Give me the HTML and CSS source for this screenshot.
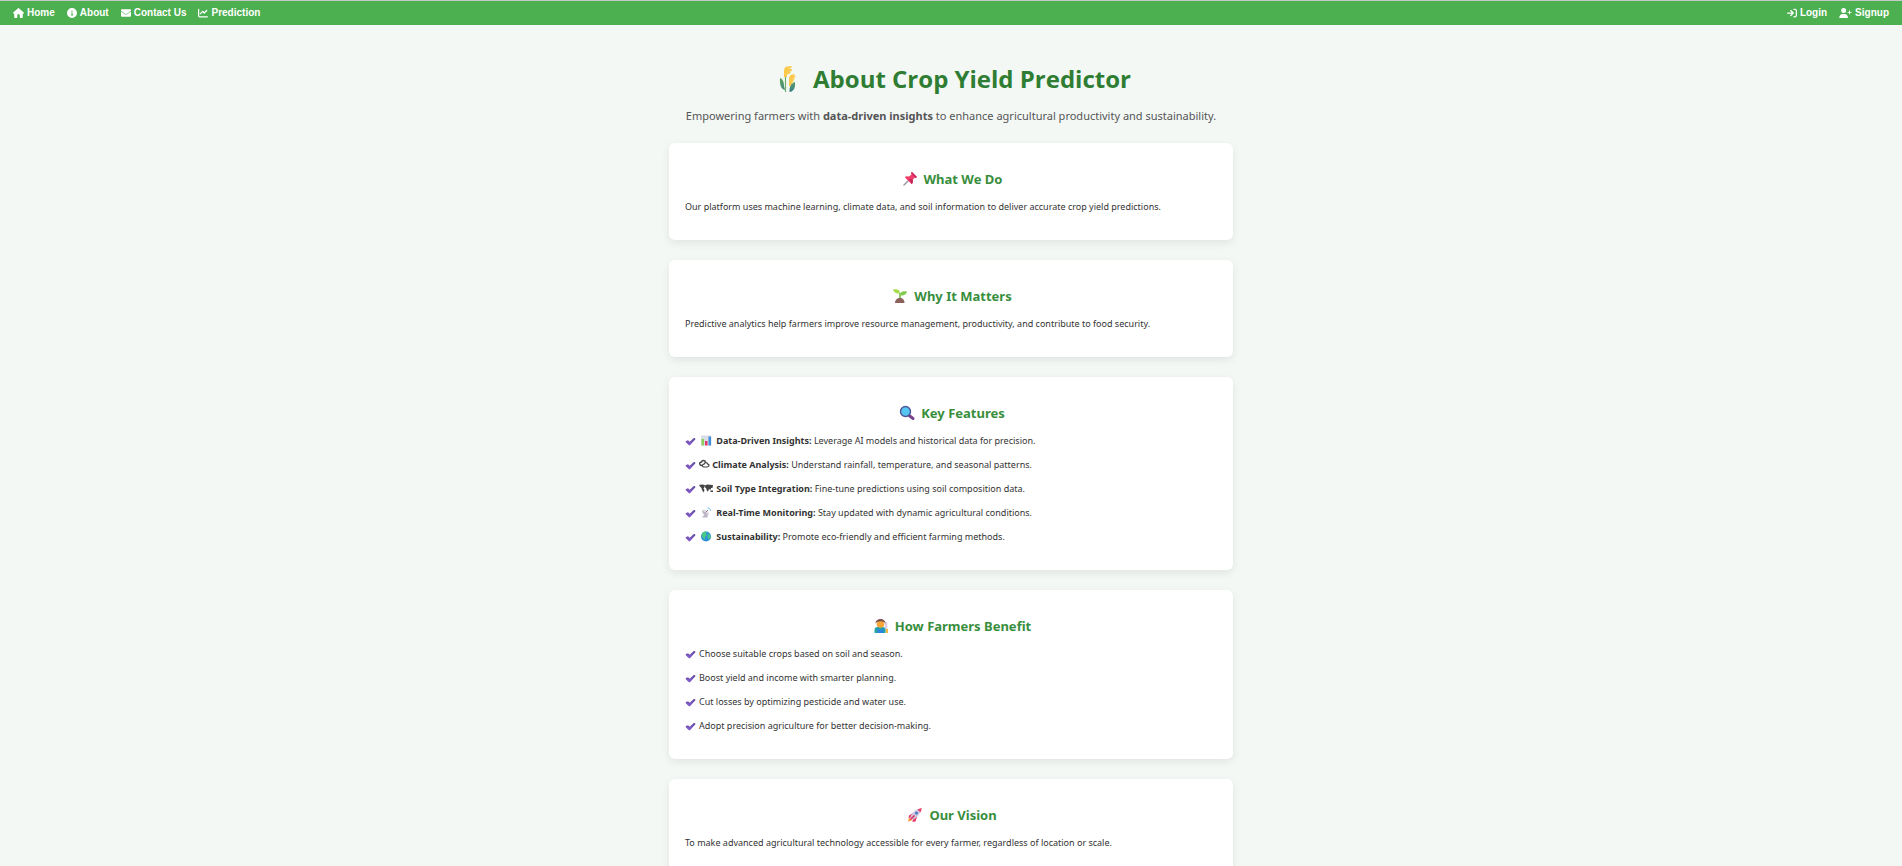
FILE: index.html
```html
<!DOCTYPE html>
<html lang="en">
<head>
<meta charset="utf-8">
<title>About Crop Yield Predictor</title>
<link rel="stylesheet" href="styles.css">
</head>
<body>
<svg class="defs" aria-hidden="true">
  <defs>
    <linearGradient id="violet" x1="0" y1="0" x2="0" y2="1"><stop offset="0" stop-color="#5f4b9c"/><stop offset="1" stop-color="#8a5fd6"/></linearGradient>
    <linearGradient id="leafdark" x1="0" y1="0" x2="0" y2="1"><stop offset="0" stop-color="#5fa557"/><stop offset="1" stop-color="#3f7f8c"/></linearGradient>
    <symbol id="check" viewBox="0 0 20 20"><path d="M2 9 L5.500 7.500 L8.500 10.500 L16 3.500 Q19 3 19 6 L9.500 16.500 Q8 18 6.500 16.500 L1.500 11.500 Q.5 10 2 9Z" fill="url(#violet)"/></symbol>
  </defs>
</svg>
<nav class="navbar">
  <div class="nav-group">
    <a class="nav-link" href="#"><svg class="nav-icon wide" viewBox="0 0 576 512"><path d="M575.800 255.500c0 18-15 32.100-32 32.100h-32l.7 160.200c0 2.700-.2 5.400-.5 8.100V472c0 22.100-17.900 40-40 40H392c-22.100 0-40-17.900-40-40V352c0-17.700-14.300-32-32-32h-64c-17.700 0-32 14.300-32 32v120c0 22.100-17.900 40-40 40h-80c-22.100 0-40-17.900-40-40V287.600H32c-18 0-32-14-32-32.100 0-9 3-17 10-24L266.400 8c7-7 15-8 22-8s15 2 21 7l255.400 224.500c8 7 12 15 11 24z"/></svg>Home</a>
    <a class="nav-link" href="#"><svg class="nav-icon" viewBox="0 0 512 512"><path fill-rule="evenodd" d="M256 512a256 256 0 1 0 0-512 256 256 0 1 0 0 512zM216 336h24v-64h-24c-13 0-24-11-24-24s11-24 24-24h48c13 0 24 11 24 24v88h8c13 0 24 11 24 24s-11 24-24 24h-80c-13 0-24-11-24-24s11-24 24-24zm40-208a32 32 0 1 1 0 64 32 32 0 1 1 0-64z"/></svg>About</a>
    <a class="nav-link" href="#"><svg class="nav-icon" viewBox="0 0 512 512"><path d="M48 64C21.500 64 0 85.500 0 112c0 15 7 29 19 38l218 164c11 8 27 8 38 0l218-164c12-9 19-23 19-38 0-26.500-21.500-48-48-48H48zM0 176v208c0 35 29 64 64 64h384c35 0 64-29 64-64V176L294 339c-23 17-53 17-76 0L0 176z"/></svg>Contact Us</a>
    <a class="nav-link" href="#"><svg class="nav-icon" viewBox="0 0 512 512"><path d="M64 64c0-18-14-32-32-32S0 46 0 64v336c0 44 36 80 80 80h400c18 0 32-14 32-32s-14-32-32-32H80c-9 0-16-7-16-16V64zm407 87c12-13 12-33 0-46s-33-12-46 0L320 211l-57-58c-13-12-33-12-46 0L105 265c-12 13-12 33 0 46s33 12 46 0l89-90 57 58c13 12 33 12 46 0l128-128z"/></svg>Prediction</a>
  </div>
  <div class="nav-group">
    <a class="nav-link" href="#"><svg class="nav-icon" viewBox="0 0 512 512"><path d="M352 96h64c18 0 32 14 32 32v256c0 18-14 32-32 32h-64c-18 0-32 14-32 32s14 32 32 32h64c53 0 96-43 96-96V128c0-53-43-96-96-96h-64c-18 0-32 14-32 32s14 32 32 32zm-9 183c13-13 13-33 0-46L215 105c-13-12-33-12-46 0s-12 33 0 46l73 73H32c-18 0-32 14-32 32s14 32 32 32h210l-73 73c-12 13-12 33 0 46s33 12 46 0l128-128z"/></svg>Login</a>
    <a class="nav-link" href="#"><svg class="nav-icon wider" viewBox="0 0 640 512"><path d="M96 128a128 128 0 1 1 256 0 128 128 0 1 1-256 0zM0 482c0-98 80-178 178-178h92c98 0 178 80 178 178 0 17-13 30-30 30H30c-17 0-30-13-30-30zm504-170v-64h-64c-13 0-24-11-24-24s11-24 24-24h64v-64c0-13 11-24 24-24s24 11 24 24v64h64c13 0 24 11 24 24s-11 24-24 24h-64v64c0 13-11 24-24 24s-24-11-24-24z"/></svg>Signup</a>
  </div>
</nav>

<main class="page">
  <h1 class="title"><svg class="title-icon" viewBox="0 0 34 28"><path d="M14.500 27V8M20 27V17" stroke="#6fae68" stroke-width="1.200"/><path d="M9 13c3 1 4 4 4 8l1 4c-4-1-5.500-5-5-12zM24 17c-3 1-6 4-5.500 10 4-1 6-3 5.500-10z" fill="url(#leafdark)"/><path d="M13 12V6q0-4 3-4.500L21 1l-1 2-3 1h4.500L20 6.500l-3 .5h3l-2 2-2 .5V12zM18 21v-7q0-4 3-4.500l3-.5-1 2h2l-2 2-2 .500h3L22 16l-1 .5h2l-2 2-1 .5v2z" fill="#fcc94a"/></svg>About Crop Yield Predictor</h1>
  <p class="subtitle">Empowering farmers with <strong>data-driven insights</strong> to enhance agricultural productivity and sustainability.</p>

  <section class="card">
    <h2 class="card-title"><svg class="card-icon" viewBox="0 0 20 16"><path d="M3.500 14.500L9 9" stroke="#998da5" stroke-width="1.300"/><path d="M12 1l5 5-1.500 1-1-.3-2 2.300.2 3-1.200 1L5 6.500l1-1.200 3 .2L11.500 3.500 11 2z" fill="#f03c66"/><path d="M12 1l5 5-1.500 1L11 2zM9 8l4 .500-.3 3.500-1.200 1z" fill="#c9275e"/></svg>What We Do</h2>
    <p class="card-text">Our platform uses machine learning, climate data, and soil information to deliver accurate crop yield predictions.</p>
  </section>

  <section class="card">
    <h2 class="card-title"><svg class="card-icon" viewBox="0 0 20 16"><path d="M10 11V5" stroke="#72b944" stroke-width="1.600"/><path d="M3 1.500c4-1 7 0 7 4-4 .5-6-1-7-4z" fill="#a4dc4b"/><path d="M17 3.500c-4-.5-7 0-7 4 4 .5 6.500-1 7-4z" fill="#83ca4f"/><path d="M5 15c0-3 2-5 5-5s4.500 2 4.500 5z" fill="#8b625c"/></svg>Why It Matters</h2>
    <p class="card-text">Predictive analytics help farmers improve resource management, productivity, and contribute to food security.</p>
  </section>

  <section class="card">
    <h2 class="card-title"><svg class="card-icon" viewBox="0 0 20 16"><path d="M11.500 10l4.500 3.500" stroke="#79458c" stroke-width="3" stroke-linecap="round"/><circle cx="8.500" cy="6.500" r="5" fill="#55c7f0" stroke="#4d5699" stroke-width="1.400"/></svg>Key Features</h2>
    <ul class="list">
      <li class="item"><svg class="check"><use href="#check"/></svg><span><svg class="mark" viewBox="0 0 15 11"><path d="M2 .5h10.500v10H2z" fill="#d9dce6"/><path d="M2.500 4h2.500v6.500H2.500z" fill="#8bd05a"/><path d="M6 6h2.500v4.500H6z" fill="#e0356b"/><path d="M9.500 1.500H12v9H9.500z" fill="#3b8fdc"/></svg> <strong>Data-Driven Insights:</strong> Leverage AI models and historical data for precision.</span></li>
      <li class="item"><svg class="check"><use href="#check"/></svg><span><svg class="mark small" viewBox="0 0 11 11"><g fill="none" stroke="#444"><path d="M3 6.500C0 6.500 0 3 2.500 3 3 1 6 1 6.500 3" stroke-width="1.400"/><path d="M4.500 8C2.500 7.500 3.500 5 5 5.200 5.500 3 8.500 3.200 8.500 5c2.500.5 1.500 3-.5 3z" stroke-width="1.200"/></g></svg> <strong>Climate Analysis:</strong> Understand rainfall, temperature, and seasonal patterns.</span></li>
      <li class="item"><svg class="check"><use href="#check"/></svg><span><svg class="mark" viewBox="0 0 15 11"><path d="M0 2l3-.5 3 .5-.5 2L4.500 5.500l1 1.500L4.500 9.500 3 7 2.500 5 1 3.500zM6 2.500l2-1 6 .5-.5 3-1.500 0-.5 2-1.500-1L9 8.500 8 8 7 5 6 4.500zM11.500 7.500h2.500v1.500h-2.500z" fill="#444"/></svg> <strong>Soil Type Integration:</strong> Fine-tune predictions using soil composition data.</span></li>
      <li class="item"><svg class="check"><use href="#check"/></svg><span><svg class="mark" viewBox="0 0 15 11"><path d="M3 3c0 4 3 6 7 5L3 3zM5 8l-2 2.500h6L8 8z" fill="#bdb5c5"/><path d="M3 3l7 5c.5-3-3-6-7-5z" fill="#ded9e4"/><path d="M6.500 5.500L9 3" stroke="#8d8298"/><path d="M8.500 1c2 0 3 1 3 3" stroke="#73b7ef" fill="none"/></svg> <strong>Real-Time Monitoring:</strong> Stay updated with dynamic agricultural conditions.</span></li>
      <li class="item"><svg class="check"><use href="#check"/></svg><span><svg class="mark" viewBox="0 0 15 11"><circle cx="7" cy="5.500" r="5" fill="#2d91d8"/><path d="M3 2.500C5 0 7 .5 8 1L7 3l1 1-2 2v3L4 7 2.500 5zM9 3l2.500 1v3L9.500 8 8.500 6z" fill="#49c787"/></svg> <strong>Sustainability:</strong> Promote eco-friendly and efficient farming methods.</span></li>
    </ul>
  </section>

  <section class="card">
    <h2 class="card-title"><svg class="card-icon" viewBox="0 0 20 16"><path d="M15 4v10" stroke="#d9cfe2" stroke-width="2.500"/><path d="M3.500 15v-3q0-3 3-3h5q3 0 3 3v3z" fill="#23a6a0"/><path d="M6.500 9v6h6V9l-1 2.500H8z" fill="#2d83df"/><circle cx="9.500" cy="6" r="3.800" fill="#f5a638"/><path d="M4.500 5.500c0-6 10-6 10 0L13 4c-2-1-5-1-7 0z" fill="#79504b"/><path d="M15 11h2v4h-2z" fill="#f2b942"/></svg>How Farmers Benefit</h2>
    <ul class="list">
      <li class="item"><svg class="check"><use href="#check"/></svg><span>Choose suitable crops based on soil and season.</span></li>
      <li class="item"><svg class="check"><use href="#check"/></svg><span>Boost yield and income with smarter planning.</span></li>
      <li class="item"><svg class="check"><use href="#check"/></svg><span>Cut losses by optimizing pesticide and water use.</span></li>
      <li class="item"><svg class="check"><use href="#check"/></svg><span>Adopt precision agriculture for better decision-making.</span></li>
    </ul>
  </section>

  <section class="card">
    <h2 class="card-title"><svg class="card-icon" viewBox="0 0 20 16"><path d="M3 14.500l1-4 3 3z" fill="#fa9a37"/><path d="M8 6L4 8.500 3.500 11 8 10zM12 10l-1.500 4.500L7.500 15 8 10z" fill="#ea3a68"/><path d="M5.500 10C7 5 11 2 16 1.500 16 6 12.500 10.500 8 12.500z" fill="#cfc8dc"/><path d="M12.500 2.500q2-1 4.200-1.500-.2 2.500-1.200 4.500z" fill="#ee3b67"/><circle cx="11.500" cy="6" r="1.600" fill="#4d7cc5"/><path d="M5.500 12.500l4-4" stroke="#d62e60" stroke-width="1.600"/></svg>Our Vision</h2>
    <p class="card-text">To make advanced agricultural technology accessible for every farmer, regardless of location or scale.</p>
  </section>
</main>
</body>
</html>
```
FILE: styles.css
```css
* { box-sizing: border-box; }

body {
  margin: 0;
  border-top: 1px solid #c4cbc4;
  background: #f3f8f5;
  color: #333;
  font: 9px/16px "Noto Sans", "Open Sans", sans-serif;
}

.defs { position: absolute; width: 0; height: 0; }

h1, h2, p, ul { margin: 0; }

.navbar {
  display: flex;
  justify-content: space-between;
  padding: 4px 13px;
  background: #4caf50;
}

.nav-group { display: flex; gap: 12px; }

.nav-link {
  display: flex;
  align-items: center;
  gap: 3px;
  color: #fff;
  font: bold 10px/16px "Liberation Sans", Arial, sans-serif;
  text-decoration: none;
}

.nav-icon { width: 10px; height: 10px; fill: #fff; }
.nav-icon.wide { width: 11px; }
.nav-icon.wider { width: 13px; }

.page {
  max-width: 590px;
  margin: 0 auto;
  padding: 36px 13px;
}

.title {
  display: flex;
  justify-content: center;
  align-items: center;
  gap: 8px;
  color: #2e7d32;
  font-family: "Open Sans", "Noto Sans", sans-serif;
  font-size: 24px;
  line-height: 36px;
}

.title-icon { width: 34px; height: 28px; }

.subtitle {
  margin: 9px 0 17px;
  color: #555;
  font-size: 11px;
  line-height: 20px;
  text-align: center;
}

.card {
  margin-bottom: 20px;
  padding: 26px 16px 25px;
  border-radius: 6px;
  background: #fff;
  box-shadow: 0 3px 8px rgba(0, 0, 0, 0.08);
}

.card-title {
  display: flex;
  justify-content: center;
  align-items: center;
  gap: 4px;
  margin-bottom: 10px;
  color: #388e3c;
  font-size: 13px;
  line-height: 20px;
}

.card-icon { width: 20px; height: 16px; }

.list {
  display: grid;
  gap: 8px;
  padding: 0;
  list-style: none;
}

.item { display: flex; align-items: center; gap: 3px; }
.check { width: 11px; height: 11px; }
.mark { width: 15px; height: 11px; vertical-align: -2px; }
.mark.small { width: 11px; }

strong { font-weight: 700; }
```
